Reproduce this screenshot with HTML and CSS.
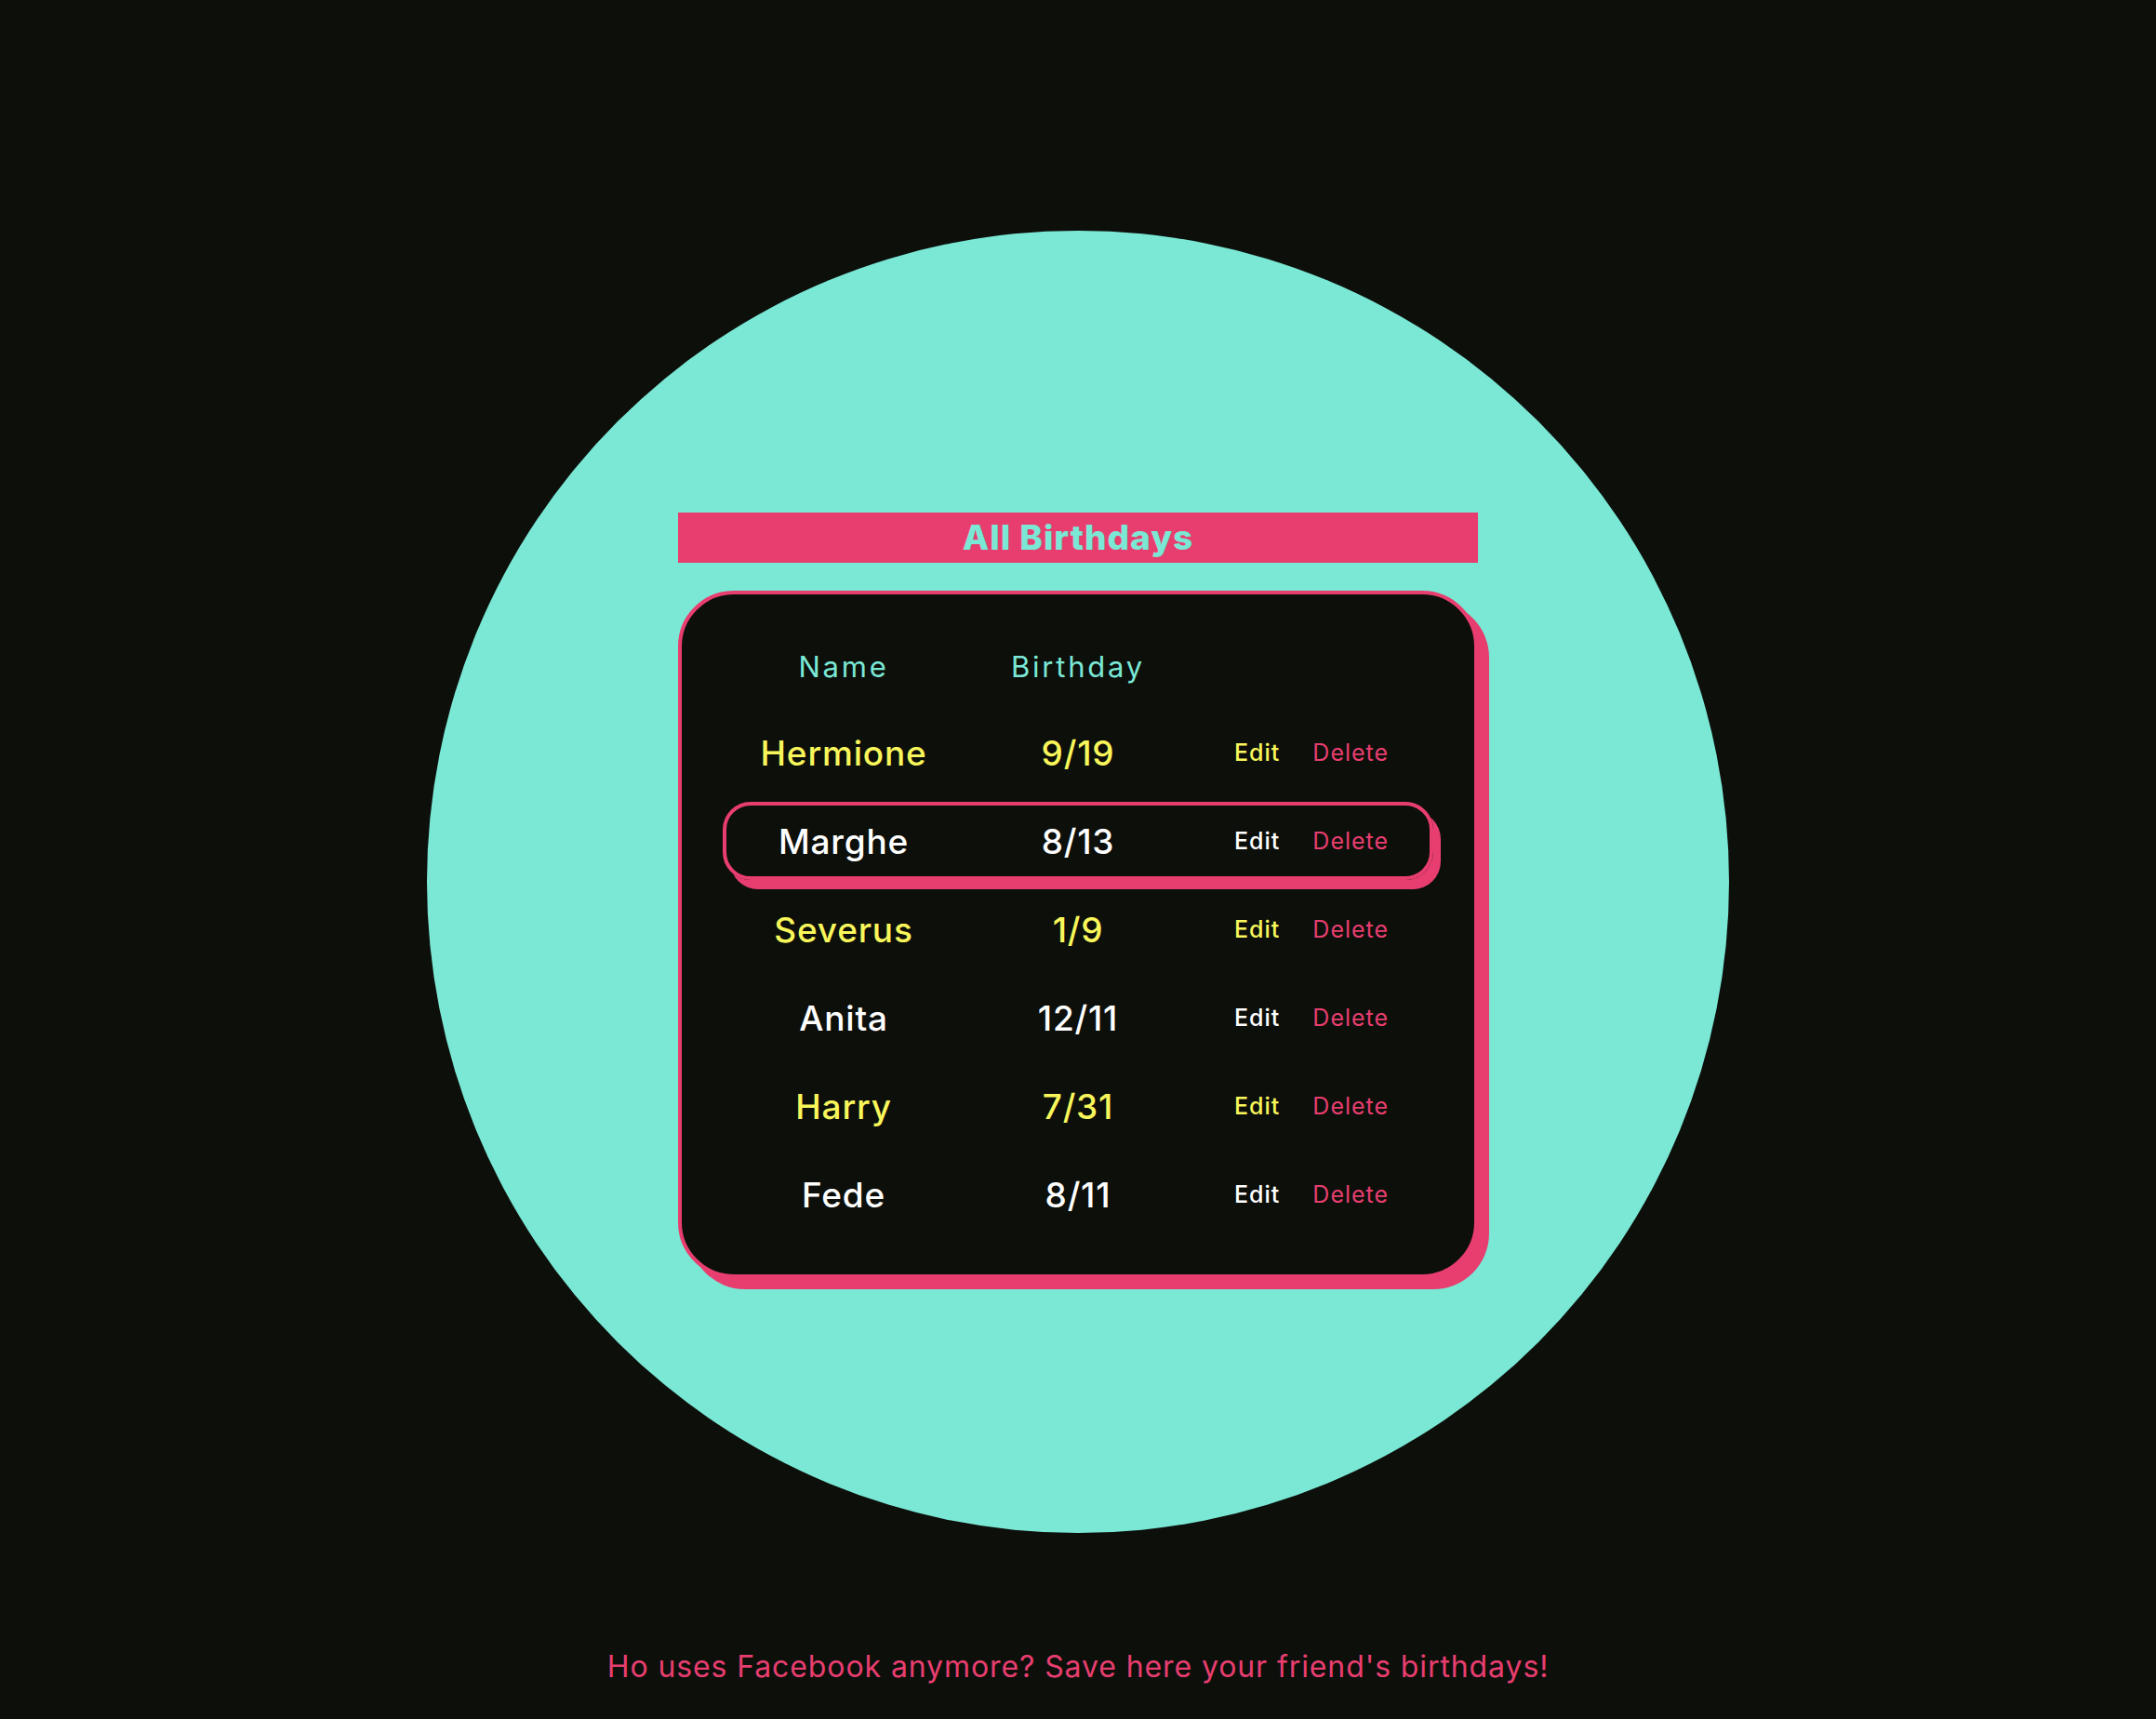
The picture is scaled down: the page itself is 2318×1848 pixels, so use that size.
FILE: index.html
```html
<!DOCTYPE html>
<html lang="en">
<head>
<meta charset="utf-8">
<title>All Birthdays</title>
<link rel="stylesheet" href="styles.css">
</head>
<body>
<main class="page">
  <section class="circle">
    <h1 class="title">All Birthdays</h1>
    <div class="card">
      <div class="row head"><span class="name">Name</span><span class="date">Birthday</span><span></span></div>
      <div class="row yellow"><span class="name">Hermione</span><span class="date">9/19</span><span class="actions"><span class="edit">Edit</span><span class="delete">Delete</span></span></div>
      <div class="row white active"><span class="name">Marghe</span><span class="date">8/13</span><span class="actions"><span class="edit">Edit</span><span class="delete">Delete</span></span></div>
      <div class="row yellow"><span class="name">Severus</span><span class="date">1/9</span><span class="actions"><span class="edit">Edit</span><span class="delete">Delete</span></span></div>
      <div class="row white"><span class="name">Anita</span><span class="date">12/11</span><span class="actions"><span class="edit">Edit</span><span class="delete">Delete</span></span></div>
      <div class="row yellow"><span class="name">Harry</span><span class="date">7/31</span><span class="actions"><span class="edit">Edit</span><span class="delete">Delete</span></span></div>
      <div class="row white"><span class="name">Fede</span><span class="date">8/11</span><span class="actions"><span class="edit">Edit</span><span class="delete">Delete</span></span></div>
    </div>
  </section>
  <p class="footer">Ho uses Facebook anymore? Save here your friend's birthdays!</p>
</main>
</body>
</html>
```
FILE: styles.css
```css
html, body {
  margin: 0;
  padding: 0;
  background: #0d0f0b;
}

body {
  font-family: Inter, "Noto Sans", "DejaVu Sans", sans-serif;
}

.page {
  box-sizing: border-box;
  height: 1848px;
  padding-top: 248px;
  display: flex;
  flex-direction: column;
  align-items: center;
  overflow: hidden;
}

.circle {
  box-sizing: border-box;
  width: 1400px;
  height: 1400px;
  border-radius: 50%;
  background: #7ae8d5;
  padding-top: 303px;
  display: flex;
  flex-direction: column;
  align-items: center;
  flex-shrink: 0;
}

.title {
  margin: 0;
  width: 860px;
  height: 54px;
  line-height: 54px;
  background: #e83e6f;
  color: #7ae8d5;
  font-size: 37px;
  font-weight: 800;
  text-align: center;
  letter-spacing: 1px;
}

.card {
  box-sizing: border-box;
  margin-top: 30px;
  width: 860px;
  border: 4px solid #e83e6f;
  border-radius: 60px;
  background: #0d0f0b;
  box-shadow: 12px 12px 0 #e83e6f;
  padding: 37px 44px 44px;
  display: flex;
  flex-direction: column;
  gap: 11px;
}

.row {
  box-sizing: border-box;
  height: 84px;
  border: 4px solid transparent;
  border-radius: 30px;
  display: grid;
  grid-template-columns: 252px 252px 1fr;
  align-items: center;
  font-size: 37px;
  font-weight: 500;
  letter-spacing: 0.8px;
}

.row.head {
  height: 80px;
  font-size: 31px;
  font-weight: 400;
  letter-spacing: 2.8px;
  color: #7ae8d5;
}

.row.active {
  border-color: #e83e6f;
  box-shadow: 8px 10px 0 #e83e6f;
}

.yellow { color: #f8f65a; }
.white { color: #ffffff; }

.name, .date {
  text-align: center;
}

.actions {
  display: flex;
  gap: 35px;
  padding-left: 42px;
  font-size: 25px;
  letter-spacing: 1px;
}

.edit { font-weight: 500; }

.delete {
  color: #e83e6f;
  font-weight: 400;
}

.footer {
  margin: 124px 0 0;
  line-height: 40px;
  font-size: 32px;
  color: #e83e6f;
  text-align: center;
  letter-spacing: 0.9px;
}
```
